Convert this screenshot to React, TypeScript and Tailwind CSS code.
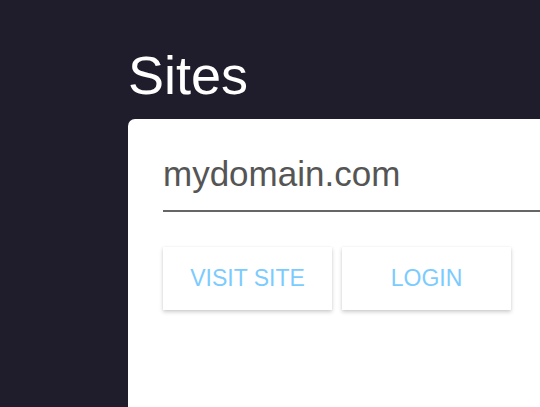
import React from 'react';

const sites = [{ domain: 'mydomain.com' }];

export default function App() {
  return (
    <div className="min-h-screen w-full overflow-hidden bg-[#1f1d2b] pl-[128px] pt-[48px] font-['Liberation_Sans',Arial,sans-serif]">
      <h1 className="text-[54px] leading-none text-white">Sites</h1>
      {sites.map((site) => (
        <div key={site.domain} className="mt-[17px] h-[300px] rounded-tl-[7px] bg-white pl-[35px] pt-[31px]">
          <div className="h-[62px] border-b-2 border-[#666666]">
            <div className="text-[35px] leading-[48px] text-[#555555]">{site.domain}</div>
          </div>
          <div className="mt-[35px] flex gap-[10px]">
            <button className="flex h-[63px] w-[169px] items-center justify-center bg-white text-[23px] uppercase text-[#7ccbff] shadow-[0_2px_4px_rgba(0,0,0,0.2),0_0_1px_rgba(0,0,0,0.08)]">
              Visit Site
            </button>
            <button className="flex h-[63px] w-[169px] items-center justify-center bg-white text-[23px] uppercase text-[#7ccbff] shadow-[0_2px_4px_rgba(0,0,0,0.2),0_0_1px_rgba(0,0,0,0.08)]">
              Login
            </button>
          </div>
        </div>
      ))}
    </div>
  );
}
